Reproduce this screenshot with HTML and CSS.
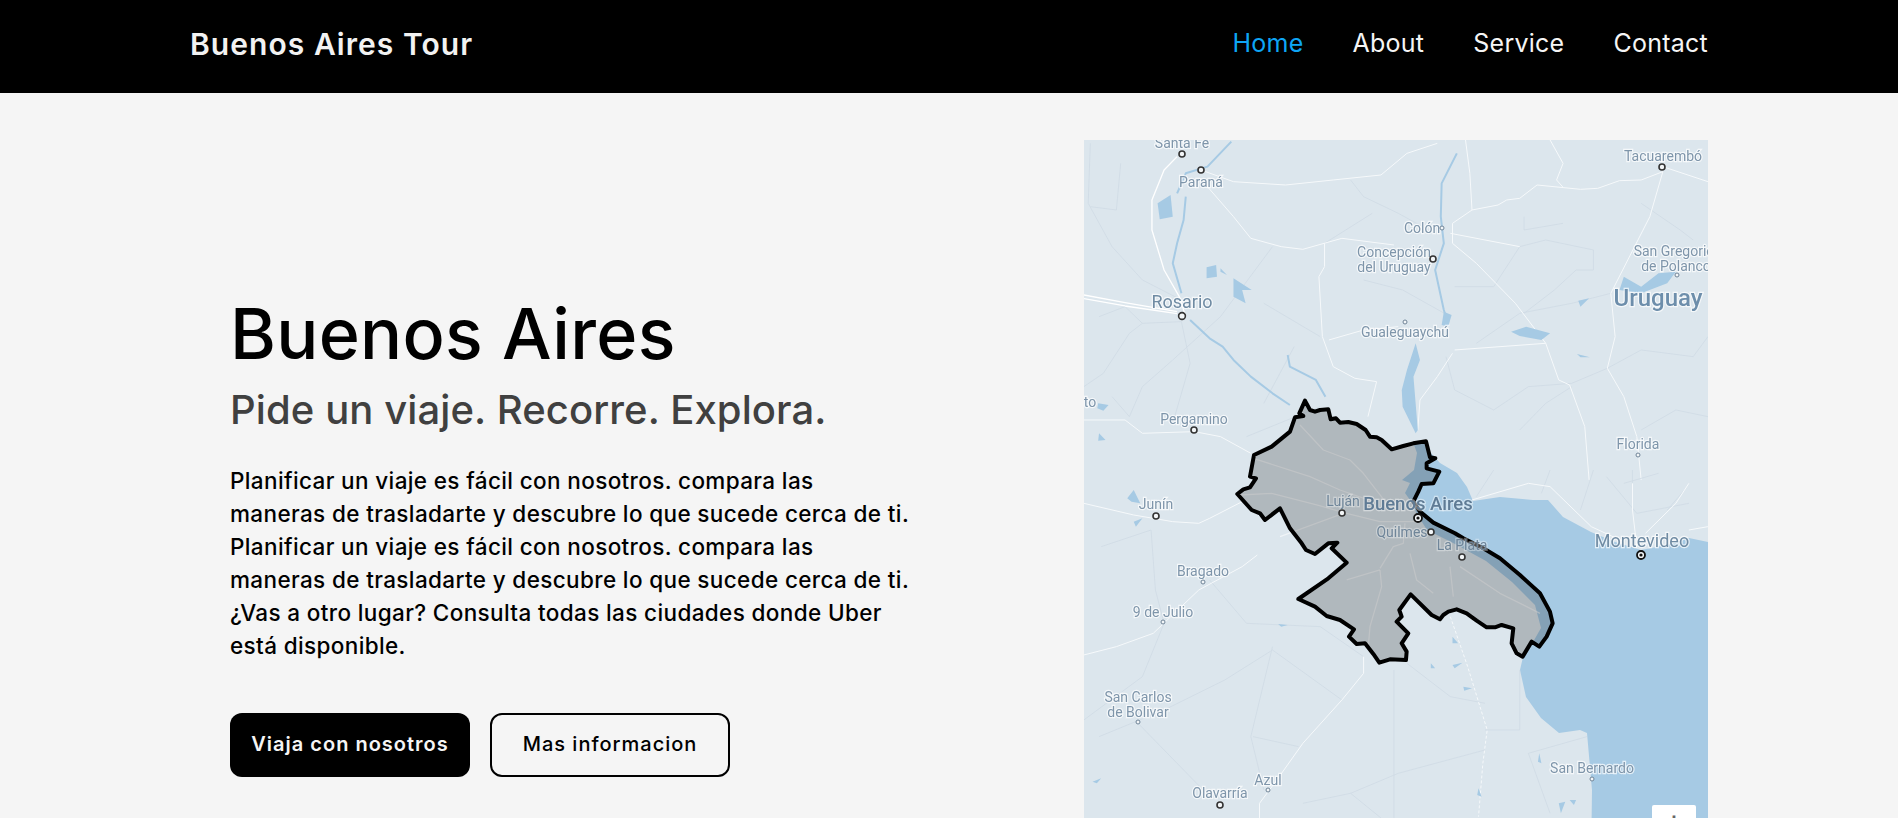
FILE: index.html
```html
<!DOCTYPE html>
<html lang="es">
<head>
<meta charset="utf-8">
<title>Buenos Aires Tour</title>
<link rel="stylesheet" href="styles.css">
</head>
<body>
<div class="page">
  <header class="topbar">
    <a class="logo" href="#">Buenos Aires Tour</a>
    <nav class="nav">
      <a class="nav-link is-active" href="#">Home</a>
      <a class="nav-link" href="#">About</a>
      <a class="nav-link" href="#">Service</a>
      <a class="nav-link" href="#">Contact</a>
    </nav>
  </header>
  <main class="hero">
    <section class="intro">
      <h1 class="title">Buenos Aires</h1>
      <h2 class="subtitle">Pide un viaje. Recorre. Explora.</h2>
      <p class="copy">Planificar un viaje es fácil con nosotros. compara las<br>maneras de trasladarte y descubre lo que sucede cerca de ti.<br>Planificar un viaje es fácil con nosotros. compara las<br>maneras de trasladarte y descubre lo que sucede cerca de ti.<br>¿Vas a otro lugar? Consulta todas las ciudades donde Uber<br>está disponible.</p>
      <div class="actions">
        <a class="btn btn-solid" href="#">Viaja con nosotros</a>
        <a class="btn btn-outline" href="#">Mas informacion</a>
      </div>
    </section>
    <div class="map">
      <svg class="map-art" viewBox="1084 140 624 800" xmlns="http://www.w3.org/2000/svg" aria-label="Mapa de Buenos Aires">
        <rect class="land" x="1084" y="140" width="624" height="800"/>

        <path class="water" d="M1413 442 L1427 440 L1430 452 L1440 463 L1457 473 L1467 487 L1473 501 L1500 497 L1533 500 L1548 500 L1563 517 L1591 532 L1615 542 L1641 550 L1667 545 L1689 538 L1708 542 L1708 940 L1590 940 L1592 790 L1587 733 L1580 730 L1559 733 L1541 718 L1526 697 L1520 670 L1523 657 L1533 642 L1541 628 L1535 605 L1512 582 L1486 561 L1455 544 L1427 530 L1417 514 L1410 500 L1405 493 L1410 483 L1402 480 L1414 470 L1417 453 Z"/>

        <g class="z2" transform="translate(1060 130) scale(.4337 .3333)">
          <g class="minor">
            <path d="M70 40 L65 220 L120 350 L190 450 L280 510"/>
            <path d="M140 100 L130 240 L70 230 M90 560 L150 530 L190 580 L280 575 L300 700 L260 880"/>
            <path d="M55 770 L100 730 L160 610 L190 580 M160 860 L190 770 L260 690 L370 560 L490 350"/>
            <path d="M720 250 L610 340 M670 150 L700 200 L780 250 L850 300 M700 450 L790 480 L900 560"/>
            <path d="M910 470 L1000 470 L1060 350 L1120 330 L1230 360 L1230 420 L1190 420 L1140 480 L1070 550"/>
            <path d="M1070 260 L1070 300 L1160 280 M1270 490 L1180 520 L1060 550 L960 640"/>
            <path d="M1262 715 L1180 760 L1080 770 L1000 840 L910 780 L890 680 M1060 900 L1120 820 L1180 770"/>
            <path d="M1340 220 L1430 300 L1460 330 M1262 715 L1340 660 L1460 680 L1494 620 M1340 900 L1420 840 L1494 860"/>
            <path d="M160 860 L120 800 M470 520 L600 620 M540 650 L470 820 M430 920 L600 830"/>
          </g>
          <g class="road">
            <path class="mid" d="M270 80 L240 120 L212 210 L212 300 L240 420 L275 500 L290 560"/>
            <path d="M325 120 L400 155 L520 165 L630 150 L740 135 L800 70 L870 40"/>
            <path d="M340 170 L400 260 L440 325 L510 350 L560 358 L650 325 L770 345"/>
            <path d="M610 340 L610 410 L597 440 L605 620 L630 710 L680 745 L730 755 L710 860"/>
            <path d="M620 630 L700 600 L780 590"/>
            <path d="M935 30 L945 130 L950 240 L905 280 L905 340 L960 400 L1050 520 L1120 640 L1150 750 L1175 765 L1210 890 L1220 1050"/>
            <path d="M950 240 L1010 225 L1030 210 L1060 205 L1100 165 L1200 178 L1240 175 L1290 152 L1340 150 L1390 125"/>
            <path d="M1130 30 L1160 100 L1145 150 L1160 172"/>
            <path d="M1390 125 L1360 260 L1270 490 L1280 620 L1262 715 L1300 800 L1330 920 L1340 1050"/>
            <path d="M1390 110 L1494 155 M905 670 L870 740 L830 810 L825 900 M910 660 L1120 640 M900 310 L1060 350"/>
            <path d="M55 870 L150 870 L190 910 L310 905 L370 920 L440 970"/>
            <path class="mid" d="M55 495 L150 518 L270 545 M55 506 L150 528 L270 551"/>
          </g>
          <g class="river">
            <path d="M300 570 L345 625 L375 650 L400 690 L440 740 L490 790 L530 825"/>
            <path d="M290 200 L285 270 L270 340 L260 400 L280 490"/>
            <path d="M395 35 L340 110 L290 130 L270 190"/>
            <path d="M915 70 L880 160 L878 260 L885 340 L865 420 L885 540 L895 580"/>
            <path d="M525 675 L530 710 L590 750 L612 800"/>
          </g>
          <g class="lake">
            <path d="M225 220 L255 195 L260 260 L230 268 Z"/>
            <path d="M338 412 L360 405 L362 440 L338 445 Z M370 415 L385 435 L370 425 Z"/>
            <path d="M400 445 L442 480 L420 480 L428 520 L400 500 Z"/>
            <path d="M820 640 L830 690 L815 740 L825 900 L820 910 L790 830 L788 780 L800 720 Z"/>
            <path d="M885 545 L903 555 L895 590 L880 585 Z"/>
            <path d="M1300 440 L1340 470 L1380 430 L1420 425 L1400 460 L1340 490 L1290 480 Z"/>
            <path d="M1195 512 L1220 505 L1200 530 Z M1192 672 L1222 682 L1200 682 Z"/>
            <path d="M1040 605 L1075 590 L1130 610 L1110 630 L1060 618 Z"/>
            <path d="M88 820 L112 825 L100 842 L86 835 Z M90 910 L105 930 L88 932 Z"/>
          </g>
        </g>

        <g class="z3" transform="translate(1060 470) scale(.4337 .3333)">
          <g class="minor">
            <path d="M95 230 L210 180 L220 360 L240 460 L190 620 L55 750"/>
            <path d="M345 330 L430 460 L600 470 L700 560 M490 530 L440 800 L470 960"/>
            <path d="M180 760 L330 960 M380 630 L490 540 L650 690 M380 630 L240 720 L90 800"/>
            <path d="M770 600 L770 1044 M800 580 L900 680 L980 700 M670 970 L780 910 L980 840"/>
            <path d="M445 800 L550 830 M670 970 L740 1044 M1060 600 L1060 780 L980 780"/>
            <path d="M1080 850 L1215 800 M1080 850 L1130 1030 M560 1000 L670 970"/>
            <path d="M1000 0 L960 80 M1130 0 L1110 70 M1230 0 L1200 120 M1320 0 L1320 100 M1440 60 L1400 120"/>
            <path d="M1260 20 L1330 130 M1330 130 L1450 100 M1300 40 L1380 10"/>
          </g>
          <g class="road">
            <path d="M55 100 L170 135 L260 155 L320 160 L345 145 L420 95"/>
            <path d="M55 555 L130 530 L215 490 L320 360 L420 290 L455 255"/>
            <path d="M700 560 L700 610 L650 690 L560 820 L500 930 L460 1000 L460 1044"/>
            <path d="M950 90 L1080 40 L1130 50 L1225 170 L1300 215"/>
            <path d="M1320 40 L1320 120 L1330 230 M1450 40 L1420 100 L1350 190 M1450 180 L1494 170"/>
            <path class="dash" d="M900 440 L940 590 L985 780 L975 880 L965 1040"/>
          </g>
          <g class="lake">
            <path d="M155 85 L170 60 L185 100 L165 95 Z M170 155 L190 145 L175 170 Z"/>
            <path d="M503 462 L525 465 L510 470 Z M905 500 L918 520 L905 520 Z M855 580 L865 595 L855 595 Z M905 585 L928 578 L910 595 Z"/>
            <path d="M930 650 L950 655 L932 662 Z M1105 850 L1110 880 L1102 875 Z M1150 1000 L1165 995 L1155 1030 Z M1175 990 L1190 990 L1185 1005 Z"/>
            <path d="M75 935 L95 925 L85 940 Z M965 955 L972 980 L962 975 Z"/>
          </g>
        </g>

        <g class="z5" transform="translate(1200 380) scale(.3333)">
          <g class="road soft">
            <path d="M160 235 L330 290 L420 330 L520 365 M300 135 L370 210 L450 240 L490 280 L560 370"/>
            <path d="M120 345 L215 340 L350 375 L440 400 L540 425 L650 425 M430 400 L240 470"/>
            <path d="M540 565 L580 500 L610 490 L615 430 M540 570 L545 620 L510 740 L505 800 M750 560 L760 650"/>
            <path d="M440 600 L540 570 M630 520 L650 600 L700 640 M780 560 L900 640 L1020 700"/>
          </g>
          <path class="region" d="M315 62 L330 90 L345 95 L360 90 L385 88 L392 118 L408 115 L420 128 L445 126 L470 132 L497 150 L510 170 L530 172 L545 180 L575 208 L610 198 L640 190 L678 184 L690 232 L706 235 L680 250 L680 265 L718 275 L700 310 L665 312 L655 335 L640 365 L660 395 L700 428 L765 460 L790 475 L850 505 L900 535 L960 585 L1020 640 L1050 695 L1058 730 L1040 770 L1018 800 L995 785 L968 830 L950 820 L935 790 L940 745 L905 735 L885 742 L860 742 L830 722 L800 700 L770 688 L745 695 L730 705 L720 718 L695 705 L632 643 L598 690 L605 710 L590 725 L625 760 L605 790 L620 815 L618 840 L570 838 L538 848 L520 822 L495 790 L470 792 L447 770 L462 748 L420 720 L380 708 L345 680 L295 657 L385 595 L440 548 L395 505 L412 488 L385 490 L345 522 L318 510 L305 490 L270 445 L240 385 L195 420 L180 400 L155 390 L112 342 L130 328 L150 322 L168 295 L150 290 L162 225 L215 200 L270 155 L285 112 L310 108 L298 100 Z"/>
        </g>

        <g class="labels">
          <text x="1182" y="148">Santa Fe</text>
          <text x="1201" y="187">Paraná</text>
          <text x="1663" y="161">Tacuarembó</text>
          <text x="1422" y="233">Colón</text>
          <text x="1394" y="257">Concepción</text>
          <text x="1394" y="272">del Uruguay</text>
          <text x="1674" y="256">San Gregorio</text>
          <text x="1676" y="271">de Polanco</text>
          <text class="label-country" x="1658" y="306">Uruguay</text>
          <text class="label-big" x="1182" y="308">Rosario</text>
          <text x="1405" y="337">Gualeguaychú</text>
          <text x="1090" y="407">to</text>
          <text x="1194" y="424">Pergamino</text>
          <text x="1638" y="449">Florida</text>
          <text x="1156" y="509">Junín</text>
          <text class="label-soft" x="1343" y="506">Luján</text>
          <text class="label-capital" x="1418" y="510">Buenos Aires</text>
          <text class="label-soft" x="1402" y="537">Quilmes</text>
          <text class="label-soft" x="1462" y="550">La Plata</text>
          <text class="label-big" x="1642" y="547">Montevideo</text>
          <text x="1203" y="576">Bragado</text>
          <text x="1163" y="617">9 de Julio</text>
          <text x="1138" y="702">San Carlos</text>
          <text x="1138" y="717">de Bolivar</text>
          <text x="1268" y="785">Azul</text>
          <text x="1220" y="798">Olavarría</text>
          <text x="1592" y="773">San Bernardo</text>
        </g>

        <g class="cities">
          <circle cx="1182" cy="154" r="3"/><circle cx="1201" cy="170" r="3"/><circle cx="1662" cy="167" r="3"/>
          <circle cx="1433" cy="259" r="3"/><circle cx="1182" cy="316" r="3.4"/><circle cx="1194" cy="430" r="3"/>
          <circle cx="1156" cy="516" r="3"/><circle cx="1342" cy="513" r="3"/><circle cx="1431" cy="532" r="3"/>
          <circle cx="1462" cy="557" r="3"/><circle cx="1220" cy="805" r="3"/>
        </g>
        <g class="cities-small">
          <circle cx="1442" cy="228" r="2"/><circle cx="1677" cy="275" r="2"/><circle cx="1405" cy="322" r="2"/>
          <circle cx="1638" cy="455" r="2"/><circle cx="1203" cy="582" r="2"/><circle cx="1163" cy="622" r="2"/>
          <circle cx="1138" cy="722" r="2"/><circle cx="1268" cy="790" r="2"/><circle cx="1592" cy="779" r="2"/>
        </g>
        <g class="capitals">
          <circle cx="1418" cy="518" r="4"/><circle class="capital-dot" cx="1418" cy="518" r="1.6"/>
          <circle cx="1641" cy="555" r="4"/><circle class="capital-dot" cx="1641" cy="555" r="1.6"/>
        </g>
      </svg>
      <div class="zoom-control"><span class="zoom-plus">+</span></div>
    </div>
  </main>
</div>
</body>
</html>
```
FILE: styles.css
```css
* { box-sizing: border-box; }
html, body { margin: 0; height: 100%; }
body { background: #f5f5f5; color: #000; font-family: Inter, "Liberation Sans", sans-serif; }
a { text-decoration: none; color: inherit; }
.page { height: 818px; overflow: hidden; }

.topbar {
  height: 93px;
  background: #000;
  padding: 0 190px 5px;
  display: flex;
  align-items: center;
  justify-content: space-between;
}
.logo { color: #f2f2f2; font-size: 30px; font-weight: 600; letter-spacing: 1.05px; }
.nav { display: flex; gap: 49px; margin-bottom: 2px; }
.nav-link { color: #f5f5f5; font-size: 25px; font-weight: 400; letter-spacing: 0.25px; }
.nav-link.is-active { color: #0ea5f5; }

.hero {
  display: grid;
  grid-template-columns: 1fr 624px;
  padding: 47px 190px 0;
  align-items: center;
}
.intro { padding-left: 40px; }
.title { margin: 0 0 19px; font-size: 70px; line-height: 62px; font-weight: 500; letter-spacing: 0.3px; }
.subtitle { margin: 0 0 28px; font-size: 40px; line-height: 52px; font-weight: 500; color: #404040; letter-spacing: 0.1px; }
.copy { margin: 0 0 51px; font-size: 22.5px; line-height: 33px; font-weight: 500; letter-spacing: 0.37px; }
.actions { display: flex; gap: 20px; }
.btn {
  height: 64px;
  display: flex;
  align-items: center;
  justify-content: center;
  border-radius: 12px;
  font-size: 20px;
  letter-spacing: 1px;
  font-weight: 500;
  padding-bottom: 2px;
}
.btn-solid { width: 240px; background: #000; color: #f5f5f5; font-weight: 600; }
.btn-outline { width: 240px; border: 2px solid #000; color: #000; }

.map { position: relative; width: 624px; height: 800px; overflow: hidden; background: #dce6ed; }
.map-art { display: block; width: 624px; height: 800px; filter: blur(0.45px); }
.land { fill: #dce6ed; }
.water, .lake path { fill: #a6cae4; }
.road path, .minor path, .river path { fill: none; vector-effect: non-scaling-stroke; stroke-linejoin: round; }
.road path { stroke: #f6f9fb; stroke-width: 1; }
.road .mid { stroke: #ffffff; stroke-width: 1.3; }
.road .dash { stroke-dasharray: 3 2; }
.road.soft path { stroke: #ffffff; stroke-width: 1.3; stroke-opacity: 0.55; }
.minor path { stroke: #cfdbe4; stroke-width: 0.8; }
.river path { stroke: #a6cae4; stroke-width: 2; }
.region {
  fill: #000;
  fill-opacity: 0.2;
  stroke: #000;
  stroke-width: 4;
  vector-effect: non-scaling-stroke;
  stroke-linejoin: round;
}
.labels text {
  font-family: Roboto, "Liberation Sans", sans-serif;
  font-size: 14px;
  text-anchor: middle;
  fill: #7e95aa;
  stroke: #ffffff;
  stroke-opacity: 0.7;
  stroke-width: 2.4px;
  paint-order: stroke;
}
.labels .label-soft { stroke-opacity: 0.35; fill: #6f8599; }
.labels .label-big { font-size: 18px; fill: #6f8ba3; }
.labels .label-capital { font-size: 18.5px; font-weight: 500; fill: #5f7b95; stroke-opacity: 0.45; }
.labels .label-country { font-size: 24px; font-weight: 500; fill: #6d8eab; }
.cities circle { fill: #f3f6f8; stroke: #333; stroke-width: 1.6; }
.cities-small circle { fill: #f3f6f8; stroke: #6f8497; stroke-width: 1; }
.capitals circle { fill: #f3f6f8; stroke: #111; stroke-width: 1.8; }
.capitals .capital-dot { fill: #111; stroke: none; }

.zoom-control {
  position: absolute;
  top: 665px;
  left: 568px;
  width: 44px;
  height: 81px;
  background: #fff;
  border-radius: 2px;
  display: flex;
  justify-content: center;
}
.zoom-plus { font-family: Roboto, sans-serif; font-size: 30px; line-height: 30px; margin-top: 3px; color: #666; }
```
